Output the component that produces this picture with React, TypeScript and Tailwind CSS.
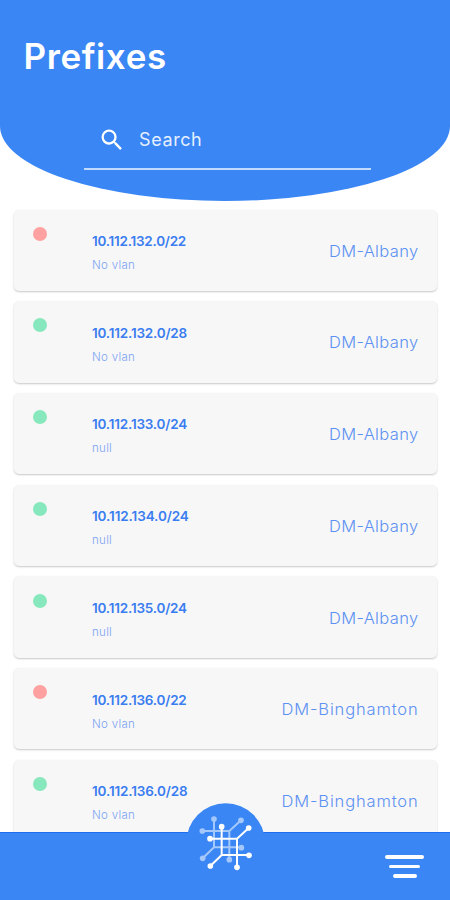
type Prefix = {
  range: string;
  vlan: string;
  site: string;
  online: boolean;
  rangeSpacing: string;
  siteSpacing: string;
};

const albany = { site: "DM-Albany", siteSpacing: "tracking-[0.35px]" };
const binghamton = { site: "DM-Binghamton", siteSpacing: "tracking-[0.85px]" };

const prefixes: Prefix[] = [
  { range: "10.112.132.0/22", vlan: "No vlan", ...albany, online: false, rangeSpacing: "tracking-[-0.25px]" },
  { range: "10.112.132.0/28", vlan: "No vlan", ...albany, online: true, rangeSpacing: "tracking-[-0.2px]" },
  { range: "10.112.133.0/24", vlan: "null", ...albany, online: true, rangeSpacing: "tracking-[-0.2px]" },
  { range: "10.112.134.0/24", vlan: "null", ...albany, online: true, rangeSpacing: "tracking-[-0.1px]" },
  { range: "10.112.135.0/24", vlan: "null", ...albany, online: true, rangeSpacing: "tracking-[-0.2px]" },
  { range: "10.112.136.0/22", vlan: "No vlan", ...binghamton, online: false, rangeSpacing: "tracking-[-0.2px]" },
  { range: "10.112.136.0/28", vlan: "No vlan", ...binghamton, online: true, rangeSpacing: "tracking-[-0.15px]" },
];

function SearchIcon() {
  return (
    <svg className="h-7 w-7 shrink-0" viewBox="0 0 24 24" fill="white">
      <path d="M15.5 14h-.79l-.28-.27A6.471 6.471 0 0 0 16 9.5 6.5 6.5 0 1 0 9.5 16c1.61 0 3.09-.59 4.23-1.57l.27.28v.79l5 4.99L20.49 19l-4.99-5zm-6 0C7.01 14 5 11.99 5 9.5S7.01 5 9.5 5 14 7.01 14 9.5 11.99 14 9.5 14z" />
    </svg>
  );
}

function Circuit() {
  return (
    <>
      <path
        d="M90 146H171L206 114M171 146V232M125 110V195L91 228M125 195H207"
        fill="none"
        stroke="currentColor"
        strokeWidth="6"
      />
      <g fill="currentColor">
        <circle cx="90" cy="146" r="8.5" />
        <circle cx="125" cy="110" r="8.5" />
        <circle cx="206" cy="114" r="8.5" />
        <circle cx="207" cy="196" r="8.5" />
        <circle cx="171" cy="232" r="8.5" />
        <circle cx="91" cy="228" r="8.5" />
      </g>
    </>
  );
}

function Card({ item }: { item: Prefix }) {
  return (
    <li className="flex h-[81.4px] shrink-0 rounded-[5px] bg-[#f7f7f7] pr-[18px] pl-[19px] shadow-[0_1px_2px_rgba(0,0,0,0.22)]">
      <span
        className={`mt-[17.2px] h-[14px] w-[14px] shrink-0 rounded-full ${item.online ? "bg-[#87e8bd]" : "bg-[#ffa1a1]"}`}
      />
      <div className="ml-[45.5px] flex grow flex-col pt-[22.5px] whitespace-nowrap">
        <span className={`text-[13.5px] leading-[18px] font-semibold text-[#3a7df0] ${item.rangeSpacing}`}>
          {item.range}
        </span>
        <span className="mt-[7px] text-[11.5px] leading-4 font-light tracking-[0.3px] text-[#7ba3f3]">{item.vlan}</span>
      </div>
      <span
        className={`mt-[1px] self-center text-[16.5px] leading-5 font-light whitespace-nowrap text-[#5c91f3] ${item.siteSpacing}`}
      >
        {item.site}
      </span>
    </li>
  );
}

export default function App() {
  return (
    <div className="flex h-[900px] w-[450px] flex-col overflow-hidden bg-white font-['Inter','Liberation_Sans',sans-serif]">
      <header className="flex h-[201px] shrink-0 flex-col rounded-b-[50%_75px] bg-[#3a86f4]">
        <h1 className="mt-[34px] ml-[23.5px] text-[35px] leading-[44px] font-semibold tracking-[0.6px] text-white">
          Prefixes
        </h1>
        <label className="mt-[34px] ml-[84px] flex h-[58px] w-[287px] items-center border-b-2 border-[#c3daff] pl-[14px]">
          <SearchIcon />
          <span className="ml-[13px] text-[18px] leading-6 tracking-[0.6px] text-[#e5efff]">Search</span>
        </label>
      </header>

      <ul className="flex min-h-0 grow flex-col gap-[10.3px] overflow-hidden px-[13.5px] pt-[8.6px]">
        {prefixes.map((item) => (
          <Card key={item.range} item={item} />
        ))}
      </ul>

      <nav className="relative flex h-[68px] shrink-0 items-center justify-end border-t border-[#1d70ed] bg-[#3a86f4] pr-[26px]">
        <svg className="absolute -top-[43px] left-[180px] h-[110px] w-[100px]" viewBox="0 0 300 330">
          <circle cx="137" cy="158" r="118" fill="#3a86f4" />
          <g transform="translate(-23 -23)" className="text-[#a5c8fc]">
            <Circuit />
          </g>
          <g className="text-white">
            <Circuit />
          </g>
        </svg>
        <div className="flex w-[39px] flex-col items-center gap-[6px]">
          <span className="h-[3.8px] w-[39px] rounded-full bg-white" />
          <span className="h-[3.8px] w-[31px] rounded-full bg-white" />
          <span className="h-[3.8px] w-[24px] rounded-full bg-white" />
        </div>
      </nav>
    </div>
  );
}
